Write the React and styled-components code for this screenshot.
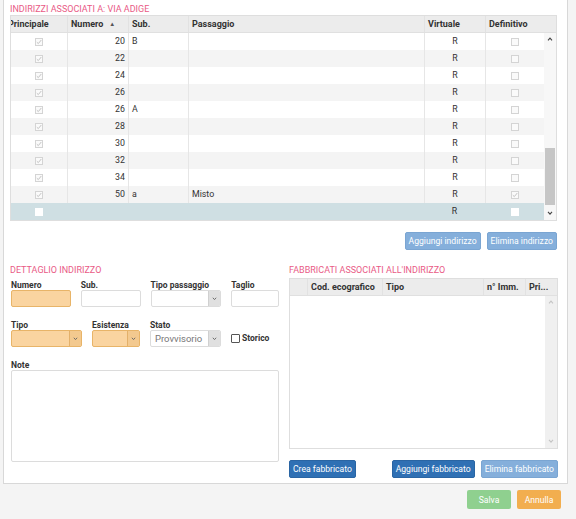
import React from 'react';
import styled, { createGlobalStyle } from 'styled-components';

const GlobalStyle = createGlobalStyle`
  body {
    margin: 0;
    background: #f4f4f4;
    font-family: Roboto, "Liberation Sans", sans-serif;
    color: #333;
  }
`;

const rows = [
  { num: 20, sub: 'B', pass: '', def: false },
  { num: 22, sub: '', pass: '', def: false },
  { num: 24, sub: '', pass: '', def: false },
  { num: 26, sub: '', pass: '', def: false },
  { num: 26, sub: 'A', pass: '', def: false },
  { num: 28, sub: '', pass: '', def: false },
  { num: 30, sub: '', pass: '', def: false },
  { num: 32, sub: '', pass: '', def: false },
  { num: 34, sub: '', pass: '', def: false },
  { num: 50, sub: 'a', pass: 'Misto', def: true },
];

const Panel = styled.div`
  margin-left: 3px;
  width: 553px;
  background: #fff;
  border: 1px solid #d8d8d8;
  border-top: none;
  padding: 3px 4px 5px 6px;
`;

const SectionTitle = styled.div`
  color: #e95b86;
  font-size: 9px;
  line-height: 12px;
  text-transform: uppercase;
  white-space: nowrap;
`;

const Table = styled.div`
  border: 1px solid #dedede;
  width: ${(p) => p.$width}px;
  box-sizing: border-box;
  font-size: 8.8px;
  ${(p) => p.$height && `height: ${p.$height}px; display: flex; flex-direction: column;`}
`;

const HeaderRow = styled.div`
  display: grid;
  grid-template-columns: ${(p) => p.$cols};
  height: 17px;
  background: #ececec;
  border-bottom: 1px solid #e0e0e0;
  box-sizing: border-box;
`;

const HeadCell = styled.div`
  font-weight: 700;
  font-size: 9px;
  color: #333;
  line-height: 16px;
  padding-left: 3px;
  border-left: ${(p) => (p.$divider ? '1px solid #e2e2e2' : 'none')};
  overflow: hidden;
  white-space: nowrap;
  text-indent: ${(p) => p.$indent || 0}px;
`;

const SortArrow = styled.span`
  font-size: 6px;
  margin-left: 6px;
  color: #555;
  vertical-align: 1px;
`;

const BodyWrap = styled.div`
  display: flex;
  flex: 1;
`;

const Rows = styled.div`
  flex: 1;
`;

const Row = styled.div`
  display: grid;
  grid-template-columns: ${(p) => p.$cols};
  height: 17px;
  background: ${(p) => (p.$selected ? '#cfdfe3' : p.$odd ? '#f4f4f4' : '#fff')};
`;

const Cell = styled.div`
  line-height: 17px;
  padding: 0 3px;
  border-left: ${(p) => (p.$divider ? '1px solid #e6e6e6' : 'none')};
  display: flex;
  align-items: center;
  justify-content: ${(p) =>
    p.$align === 'right' ? 'flex-end' : p.$align === 'center' ? 'center' : 'flex-start'};
  color: #333;
`;

const Box = styled.span`
  width: 8px;
  height: 8px;
  box-sizing: border-box;
  border: 1px solid ${(p) => (p.$white ? '#fff' : '#d4d4d4')};
  background: ${(p) => (p.$white ? '#fff' : '#fafafa')};
  display: inline-flex;
  align-items: center;
  justify-content: center;
`;

const Check = ({ checked, white }) => (
  <Box $white={white}>
    {checked && (
      <svg width="6" height="6" viewBox="0 0 6 6">
        <polyline points="0.8,3.2 2.3,4.6 5.3,1" fill="none" stroke="#bdbdbd" strokeWidth="0.9" />
      </svg>
    )}
  </Box>
);

const Scrollbar = styled.div`
  width: 12px;
  background: ${(p) => p.$track};
  display: flex;
  flex-direction: column;
  align-items: center;
`;

const ScrollArrow = styled.div`
  height: 13px;
  width: 100%;
  display: flex;
  align-items: center;
  justify-content: center;
`;

const Thumb = styled.div`
  width: 10px;
  background: #c6c6c6;
  height: ${(p) => p.$height}px;
  margin-top: ${(p) => p.$top}px;
`;

const Spacer = styled.div`
  flex: 1;
`;

const Chevron = ({ up, color = '#444', size = 6 }) => (
  <svg width={size} height={size * 0.7} viewBox="0 0 6 4">
    <polyline
      points={up ? '1,3.3 3,1 5,3.3' : '1,0.8 3,3 5,0.8'}
      fill="none"
      stroke={color}
      strokeWidth="1.1"
    />
  </svg>
);

const ButtonRow = styled.div`
  display: flex;
  justify-content: ${(p) => p.$justify || 'flex-end'};
  gap: 6px;
  margin-top: 11px;
  ${(p) => p.$width && `width: ${p.$width}px;`}
`;

const Group = styled.div`
  display: flex;
  gap: 6px;
`;

const Button = styled.button`
  font-family: inherit;
  font-size: 8.6px;
  height: 18px;
  padding: 0 3px;
  border: 1px solid ${(p) => (p.$variant === 'dark' ? '#2a65a3' : '#7aa5d2')};
  border-radius: 2px;
  color: #fff;
  background: ${(p) => (p.$variant === 'dark' ? '#2f70b4' : '#85afdb')};
  white-space: nowrap;
  cursor: pointer;
`;

const FooterButton = styled(Button)`
  width: 44px;
  height: 19px;
  border: none;
  background: ${(p) => p.$bg};
`;

const Lower = styled.div`
  display: flex;
  gap: 10px;
  margin-top: 14px;
`;

const Column = styled.div`
  width: ${(p) => p.$width}px;
  display: flex;
  flex-direction: column;
`;

const FieldRow = styled.div`
  display: flex;
  gap: 10px;
  margin-top: ${(p) => p.$mt}px;
  padding-left: 1px;
`;

const Field = styled.div`
  width: ${(p) => p.$width}px;
  display: flex;
  flex-direction: column;
`;

const Label = styled.div`
  font-size: 8.5px;
  font-weight: 700;
  line-height: 10px;
  color: #333;
  white-space: nowrap;
`;

const Input = styled.div`
  height: 17px;
  box-sizing: border-box;
  border: 1px solid ${(p) => (p.$required ? '#e8b468' : '#dcdcdc')};
  background: ${(p) => (p.$required ? '#fad4a0' : '#fff')};
  border-radius: 2px;
  display: flex;
  align-items: stretch;
  font-size: 9.5px;
  color: #777;
  overflow: hidden;
`;

const SelectText = styled.div`
  flex: 1;
  padding-left: 4px;
  line-height: 15px;
  white-space: nowrap;
`;

const SelectArrow = styled.div`
  width: 11px;
  background: ${(p) => (p.$required ? '#f3c98f' : '#e0e0e0')};
  border-left: 1px solid ${(p) => (p.$required ? '#e3b06a' : '#d0d0d0')};
  display: flex;
  align-items: center;
  justify-content: center;
`;

const Select = ({ required, value }) => (
  <Input $required={required}>
    <SelectText>{value}</SelectText>
    <SelectArrow $required={required}>
      <Chevron color="#666" size={5} />
    </SelectArrow>
  </Input>
);

const CheckLabel = styled.label`
  display: flex;
  align-items: center;
  gap: 2px;
  font-size: 8.5px;
  font-weight: 700;
  margin-top: 3px;
  align-self: flex-start;
`;

const BigBox = styled.span`
  width: 9px;
  height: 9px;
  box-sizing: border-box;
  border: 1px solid #555;
  border-radius: 1px;
  background: #fff;
`;

const TextArea = styled.div`
  height: 92px;
  box-sizing: border-box;
  border: 1px solid #dcdcdc;
  border-radius: 2px;
  margin-left: 1px;
  width: 268px;
`;

const Footer = styled.div`
  display: flex;
  justify-content: flex-end;
  gap: 6px;
  width: 561px;
  margin-top: 6px;
`;

const mainCols = '56px 61px 60px 236px 61px 59px';
const fabCols = '17px 75px 101px 42px 1fr';

export default function App() {
  return (
    <>
      <GlobalStyle />
      <Panel>
        <SectionTitle>Indirizzi associati a: Via Adige</SectionTitle>
        <Table $width={547}>
          <HeaderRow $cols={mainCols + ' 12px'}>
            <HeadCell $indent={-6}>Principale</HeadCell>
            <HeadCell $divider>
              Numero<SortArrow>▲</SortArrow>
            </HeadCell>
            <HeadCell $divider>Sub.</HeadCell>
            <HeadCell $divider>Passaggio</HeadCell>
            <HeadCell $divider>Virtuale</HeadCell>
            <HeadCell $divider>Definitivo</HeadCell>
            <HeadCell />
          </HeaderRow>
          <BodyWrap>
            <Rows>
              {rows.map((r, i) => (
                <Row key={i} $cols={mainCols} $odd={i % 2 === 1}>
                  <Cell $align="center">
                    <Check checked />
                  </Cell>
                  <Cell $align="right" $divider>
                    {r.num}
                  </Cell>
                  <Cell $divider>{r.sub}</Cell>
                  <Cell $divider>{r.pass}</Cell>
                  <Cell $align="center" $divider>
                    R
                  </Cell>
                  <Cell $align="center" $divider>
                    <Check checked={r.def} />
                  </Cell>
                </Row>
              ))}
              <Row $cols={mainCols} $selected>
                <Cell $align="center">
                  <Check white />
                </Cell>
                <Cell />
                <Cell />
                <Cell />
                <Cell $align="center">R</Cell>
                <Cell $align="center">
                  <Check white />
                </Cell>
              </Row>
            </Rows>
            <Scrollbar $track="#f7f7f7">
              <ScrollArrow>
                <Chevron up />
              </ScrollArrow>
              <Thumb $top={102} $height={57} />
              <Spacer />
              <ScrollArrow>
                <Chevron />
              </ScrollArrow>
            </Scrollbar>
          </BodyWrap>
        </Table>
        <ButtonRow $width={547}>
          <Button>Aggiungi indirizzo</Button>
          <Button>Elimina indirizzo</Button>
        </ButtonRow>

        <Lower>
          <Column $width={269}>
            <SectionTitle>Dettaglio indirizzo</SectionTitle>
            <FieldRow $mt={4}>
              <Field $width={60}>
                <Label>Numero</Label>
                <Input $required />
              </Field>
              <Field $width={60}>
                <Label>Sub.</Label>
                <Input />
              </Field>
              <Field $width={71}>
                <Label>Tipo passaggio</Label>
                <Select />
              </Field>
              <Field $width={48}>
                <Label>Taglio</Label>
                <Input />
              </Field>
            </FieldRow>
            <FieldRow $mt={13}>
              <Field $width={71}>
                <Label>Tipo</Label>
                <Select required />
              </Field>
              <Field $width={48}>
                <Label>Esistenza</Label>
                <Select required />
              </Field>
              <Field $width={71}>
                <Label>Stato</Label>
                <Select value="Provvisorio" />
              </Field>
              <Field $width={48}>
                <Label>&nbsp;</Label>
                <CheckLabel>
                  <BigBox />
                  Storico
                </CheckLabel>
              </Field>
            </FieldRow>
            <FieldRow $mt={13}>
              <Label>Note</Label>
            </FieldRow>
            <TextArea />
          </Column>

          <Column $width={270}>
            <SectionTitle>Fabbricati associati all'indirizzo</SectionTitle>
            <Table $width={269} $height={171} style={{ marginTop: 2 }}>
              <HeaderRow $cols={fabCols}>
                <HeadCell />
                <HeadCell $divider>Cod. ecografico</HeadCell>
                <HeadCell $divider>Tipo</HeadCell>
                <HeadCell $divider>n° Imm.</HeadCell>
                <HeadCell $divider>Pri...</HeadCell>
              </HeaderRow>
              <BodyWrap>
                <Rows />
                <Scrollbar $track="#f0f0f0">
                  <ScrollArrow>
                    <Chevron up color="#c4c4c4" />
                  </ScrollArrow>
                  <Spacer />
                  <ScrollArrow>
                    <Chevron color="#c4c4c4" />
                  </ScrollArrow>
                </Scrollbar>
              </BodyWrap>
            </Table>
            <ButtonRow $justify="space-between" $width={269}>
              <Button $variant="dark">Crea fabbricato</Button>
              <Group>
                <Button $variant="dark">Aggiungi fabbricato</Button>
                <Button>Elimina fabbricato</Button>
              </Group>
            </ButtonRow>
          </Column>
        </Lower>
      </Panel>
      <Footer>
        <FooterButton $bg="#8fd08f">Salva</FooterButton>
        <FooterButton $bg="#f2ae4f">Annulla</FooterButton>
      </Footer>
    </>
  );
}
